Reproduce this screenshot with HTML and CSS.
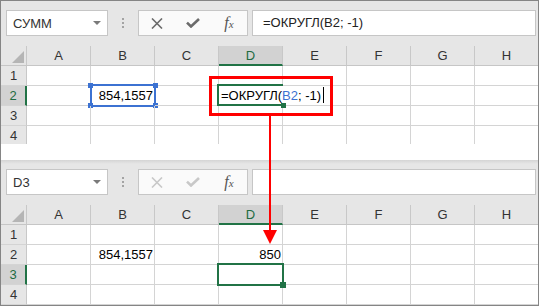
FILE: index.html
```html
<!DOCTYPE html>
<html lang="ru">
<head>
  <meta charset="UTF-8">
  <title>ОКРУГЛ</title>
  <link rel="stylesheet" href="styles.css">
</head>
<body>
  <div class="frame">
    <!-- Editing the formula -->
    <section class="sheet sheet-top">
      <div class="formula-bar">
        <div class="name-box"><span>СУММ</span><span class="caret"></span></div>
        <div class="grip"><i></i><i></i><i></i></div>
        <div class="fx-buttons">
          <div class="fx-btn">
            <svg width="12" height="11" viewBox="0 0 12 11"><path d="M1 0.5L11 10.5M11 0.5L1 10.5" stroke="#6b6b6b" stroke-width="1.6"/></svg>
          </div>
          <div class="fx-btn">
            <svg width="14" height="10" viewBox="0 0 14 10"><path d="M1 4.6L5 8.5L13 1" fill="none" stroke="#6b6b6b" stroke-width="2.6"/></svg>
          </div>
          <div class="fx-btn"><span class="fx">f<span>x</span></span></div>
        </div>
        <div class="formula-input">=ОКРУГЛ(B2; -1)</div>
      </div>
      <div class="grid">
        <div class="hd corner"><span class="corner-tri"></span></div>
        <div class="hd">A</div>
        <div class="hd">B</div>
        <div class="hd">C</div>
        <div class="hd col-active">D</div>
        <div class="hd">E</div>
        <div class="hd">F</div>
        <div class="hd">G</div>
        <div class="hd">H</div>

        <div class="hd">1</div>
        <div class="cell"></div><div class="cell"></div><div class="cell"></div><div class="cell"></div>
        <div class="cell"></div><div class="cell"></div><div class="cell"></div><div class="cell"></div>

        <div class="hd row-active">2</div>
        <div class="cell"></div>
        <div class="cell">854,1557
          <div class="range">
            <i class="dot tl"></i><i class="dot tr"></i><i class="dot bl"></i><i class="dot br"></i>
          </div>
        </div>
        <div class="cell"></div>
        <div class="cell">
          <div class="edit-text">=ОКРУГЛ(<span class="ref">B2</span>; -1)<span class="cursor"></span></div>
          <div class="sel sel-open"><i class="fill-handle"></i></div>
        </div>
        <div class="cell"></div><div class="cell"></div><div class="cell"></div><div class="cell"></div>

        <div class="hd">3</div>
        <div class="cell"></div><div class="cell"></div><div class="cell"></div><div class="cell"></div>
        <div class="cell"></div><div class="cell"></div><div class="cell"></div><div class="cell"></div>

        <div class="hd">4</div>
        <div class="cell"></div><div class="cell"></div><div class="cell"></div><div class="cell"></div>
        <div class="cell"></div><div class="cell"></div><div class="cell"></div><div class="cell"></div>
      </div>
    </section>

    <!-- Result -->
    <section class="sheet sheet-bottom">
      <div class="formula-bar">
        <div class="name-box"><span>D3</span><span class="caret"></span></div>
        <div class="grip"><i></i><i></i><i></i></div>
        <div class="fx-buttons">
          <div class="fx-btn">
            <svg width="12" height="11" viewBox="0 0 12 11"><path d="M1 0.5L11 10.5M11 0.5L1 10.5" stroke="#c8c8c8" stroke-width="1.6"/></svg>
          </div>
          <div class="fx-btn">
            <svg width="14" height="10" viewBox="0 0 14 10"><path d="M1 4.6L5 8.5L13 1" fill="none" stroke="#c8c8c8" stroke-width="2.6"/></svg>
          </div>
          <div class="fx-btn"><span class="fx">f<span>x</span></span></div>
        </div>
        <div class="formula-input"></div>
      </div>
      <div class="grid">
        <div class="hd corner"><span class="corner-tri"></span></div>
        <div class="hd">A</div>
        <div class="hd">B</div>
        <div class="hd">C</div>
        <div class="hd col-active">D</div>
        <div class="hd">E</div>
        <div class="hd">F</div>
        <div class="hd">G</div>
        <div class="hd">H</div>

        <div class="hd">1</div>
        <div class="cell"></div><div class="cell"></div><div class="cell"></div><div class="cell"></div>
        <div class="cell"></div><div class="cell"></div><div class="cell"></div><div class="cell"></div>

        <div class="hd">2</div>
        <div class="cell"></div>
        <div class="cell">854,1557</div>
        <div class="cell"></div>
        <div class="cell">850</div>
        <div class="cell"></div><div class="cell"></div><div class="cell"></div><div class="cell"></div>

        <div class="hd row-active">3</div>
        <div class="cell"></div><div class="cell"></div><div class="cell"></div>
        <div class="cell"><div class="sel"><i class="fill-handle"></i></div></div>
        <div class="cell"></div><div class="cell"></div><div class="cell"></div><div class="cell"></div>

        <div class="hd">4</div>
        <div class="cell"></div><div class="cell"></div><div class="cell"></div><div class="cell"></div>
        <div class="cell"></div><div class="cell"></div><div class="cell"></div><div class="cell"></div>
      </div>
    </section>

    <div class="callout"></div>
    <div class="arrow"></div>
  </div>
</body>
</html>
```

FILE: styles.css
```css
body {
  margin: 0;
  background: #fff;
  font-family: "Liberation Sans", Arial, sans-serif;
}

.frame {
  position: relative;
  width: 539px;
  height: 306px;
  box-sizing: border-box;
  border: 1px solid #858585;
  background: #fff;
  overflow: hidden;
}

.sheet {
  overflow: hidden;
}

.sheet-top {
  height: 143px;
}

.sheet-bottom {
  height: 145px;
  margin-top: 16px;
}

/* Formula bar */
.formula-bar {
  display: flex;
  align-items: flex-start;
  height: 45px;
  box-sizing: border-box;
  padding: 9px 0 0 5px;
  background: #e6e6e6;
}

.sheet-bottom .formula-bar {
  background: linear-gradient(#d4d4d4, #e6e6e6 4px);
}

.name-box {
  display: flex;
  align-items: center;
  justify-content: space-between;
  width: 102px;
  height: 26px;
  box-sizing: border-box;
  padding: 0 6px 0 6px;
  border: 1px solid #c6c6c6;
  background: #fff;
  font-size: 13px;
  color: #333;
}

.caret {
  width: 0;
  height: 0;
  border-left: 4px solid transparent;
  border-right: 4px solid transparent;
  border-top: 4px solid #7a7a7a;
}

.grip {
  display: flex;
  flex-direction: column;
  gap: 2px;
  margin: 8px 0 0 14px;
}

.grip i {
  display: block;
  width: 2px;
  height: 2px;
  background: #a3a3a3;
}

.fx-buttons {
  display: flex;
  width: 110px;
  height: 26px;
  box-sizing: border-box;
  margin-left: 14px;
  border: 1px solid #c6c6c6;
  background: #fafafa;
}

.fx-btn {
  display: flex;
  align-items: center;
  justify-content: center;
  width: 36px;
}

.fx {
  font-family: "Liberation Serif", serif;
  font-style: italic;
  font-size: 16px;
  color: #555;
}

.fx span {
  font-size: 11px;
}

.formula-input {
  width: 284px;
  height: 26px;
  box-sizing: border-box;
  margin-left: 4px;
  padding-left: 10px;
  border: 1px solid #c6c6c6;
  background: #fff;
  font-size: 13px;
  line-height: 24px;
  color: #222;
}

/* Grid */
.grid {
  display: grid;
  grid-template-columns: 26px repeat(8, 64px);
  grid-auto-rows: 20px;
}

.hd {
  display: flex;
  align-items: center;
  justify-content: center;
  box-sizing: border-box;
  border-right: 1px solid #c8c8c8;
  border-bottom: 1px solid #d4d4d4;
  background: #e6e6e6;
  font-size: 13px;
  color: #333;
}

.grid > .hd:nth-child(-n+9) {
  border-bottom-color: #c6c6c6;
}

.corner {
  justify-content: flex-end;
  align-items: flex-end;
  padding: 0 2px 2px 0;
}

.corner-tri {
  width: 0;
  height: 0;
  border-left: 12px solid transparent;
  border-bottom: 12px solid #b5b5b5;
}

.col-active {
  background: #d2d2d2;
  border-bottom: 2px solid #217346 !important;
  color: #1e6b41;
}

.row-active {
  background: #d2d2d2;
  border-right: 2px solid #217346;
  color: #1e6b41;
}

.cell {
  position: relative;
  box-sizing: border-box;
  padding: 0 1px;
  border-right: 1px solid #d4d4d4;
  border-bottom: 1px solid #d4d4d4;
  font-size: 13px;
  line-height: 20px;
  text-align: right;
  white-space: nowrap;
  color: #000;
}

/* Referenced range (blue) */
.range {
  position: absolute;
  left: -1px;
  top: -2px;
  width: 66px;
  height: 23px;
  box-sizing: border-box;
  border: 2px solid #3c72d2;
}

.dot {
  position: absolute;
  width: 5px;
  height: 5px;
  background: #3c72d2;
}

.dot.tl { left: -4px; top: -3px; }
.dot.tr { right: -4px; top: -3px; }
.dot.bl { left: -4px; bottom: -3px; }
.dot.br { right: -4px; bottom: -3px; }

/* Cell being edited */
.edit-text {
  position: absolute;
  left: 0;
  top: 0;
  z-index: 1;
  width: 126px;
  height: 19px;
  padding-left: 2px;
  box-sizing: border-box;
  background: #fff;
  text-align: left;
}

.ref {
  color: #3c72d2;
}

.cursor {
  display: inline-block;
  width: 1px;
  height: 16px;
  margin-left: 2px;
  vertical-align: -3px;
  background: #000;
}

/* Active cell (green) */
.sel {
  position: absolute;
  left: -2px;
  top: -2px;
  z-index: 2;
  width: 67px;
  height: 23px;
  box-sizing: border-box;
  border: 2px solid #217346;
}

.sel-open {
  width: 66px;
  height: 22px;
  border-right: none;
}

.fill-handle {
  position: absolute;
  left: 61px;
  top: 17px;
  width: 6px;
  height: 6px;
  background: #217346;
}

.sel-open .fill-handle {
  left: 62px;
  top: 17px;
  width: 5px;
  height: 5px;
}

/* Red annotation */
.callout {
  position: absolute;
  left: 208px;
  top: 75px;
  z-index: 5;
  width: 124px;
  height: 40px;
  box-sizing: border-box;
  border: 3px solid #f00;
}

.arrow {
  position: absolute;
  left: 268px;
  top: 115px;
  z-index: 5;
  width: 2px;
  height: 116px;
  background: #f00;
}

.arrow::after {
  content: "";
  position: absolute;
  left: -6px;
  top: 114px;
  border-left: 7px solid transparent;
  border-right: 7px solid transparent;
  border-top: 14px solid #f00;
}
```
